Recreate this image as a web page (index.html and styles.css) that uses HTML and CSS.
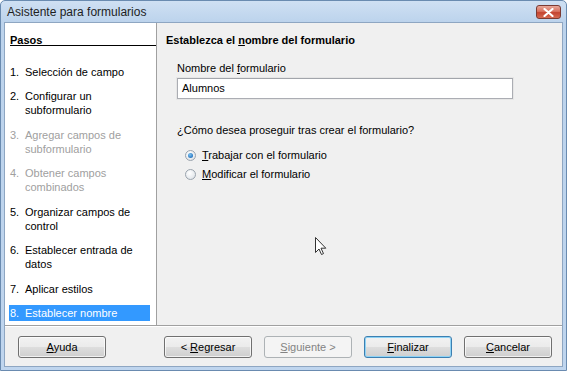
FILE: index.html
```html
<!DOCTYPE html>
<html lang="es">
<head>
<meta charset="utf-8">
<title>Asistente para formularios</title>
<link rel="stylesheet" href="styles.css">
</head>
<body>
<div class="window">
  <div class="titlebar">
    <span class="title">Asistente para formularios</span>
    <span class="close"><svg width="11" height="9" viewBox="0 0 11 9"><path d="M1.5 1 L9.5 8 M9.5 1 L1.5 8" stroke="#fff" stroke-width="2.2" stroke-linecap="round"/></svg></span>
  </div>
  <div class="client">
    <div class="main">
      <div class="steps">
        <div class="steps-head">Pasos</div>
        <ol class="step-list">
          <li class="step"><span class="num">1.</span><span class="txt">Selección de campo</span></li>
          <li class="step"><span class="num">2.</span><span class="txt">Configurar un subformulario</span></li>
          <li class="step disabled"><span class="num">3.</span><span class="txt">Agregar campos de subformulario</span></li>
          <li class="step disabled"><span class="num">4.</span><span class="txt">Obtener campos combinados</span></li>
          <li class="step"><span class="num">5.</span><span class="txt">Organizar campos de control</span></li>
          <li class="step"><span class="num">6.</span><span class="txt">Establecer entrada de datos</span></li>
          <li class="step"><span class="num">7.</span><span class="txt">Aplicar estilos</span></li>
          <li class="step selected"><span class="num">8.</span><span class="txt">Establecer nombre</span></li>
        </ol>
      </div>
      <div class="page">
        <div class="page-head">Establezca el <u>n</u>ombre del formulario</div>
        <div class="field">
          <label class="field-label">Nombre del <u>f</u>ormulario</label>
          <div class="input">Alumnos</div>
        </div>
        <div class="question">¿Cómo desea proseguir tras crear el formulario?</div>
        <div class="radios">
          <div class="radio-row"><span class="radio checked"><span class="dot"></span></span><span><u>T</u>rabajar con el formulario</span></div>
          <div class="radio-row"><span class="radio"></span><span><u>M</u>odificar el formulario</span></div>
        </div>
        <svg class="cursor" width="12" height="19" viewBox="0 0 12 19"><path d="M0.5 0.5 L0.5 15.5 L4 12 L6.5 17.5 L8.5 16.6 L6 11.2 L10.8 11.2 Z" fill="#fff" stroke="#333" stroke-width="1"/></svg>
      </div>
    </div>
    <div class="footer">
      <button class="btn"><u>A</u>yuda</button>
      <div class="nav">
        <button class="btn">&lt; <u>R</u>egresar</button>
        <button class="btn disabled"><u>S</u>iguiente &gt;</button>
        <button class="btn default"><u>F</u>inalizar</button>
        <button class="btn"><u>C</u>ancelar</button>
      </div>
    </div>
  </div>
</div>
</body>
</html>
```
FILE: styles.css
```css
html, body {
  margin: 0;
  padding: 0;
  background: #ffffff;
}
body {
  font-family: "Liberation Sans", Arial, sans-serif;
  font-size: 11px;
  color: #000;
}
.window {
  width: 567px;
  height: 371px;
  box-sizing: border-box;
  border: 1px solid #6a8bb0;
  border-radius: 5px 5px 0 0;
  background: linear-gradient(to bottom, #cfe0f3 0px, #bcd3ec 21px, #bfd5ee 100%);
  display: flex;
  flex-direction: column;
  padding: 0 3px 3px 3px;
}
.titlebar {
  height: 21px;
  display: flex;
  align-items: center;
  justify-content: space-between;
  padding: 0 2px 0 3px;
}
.title {
  font-size: 12px;
  color: #1e1e1e;
}
.close {
  width: 25px;
  height: 14px;
  box-sizing: border-box;
  border: 1px solid #7a3a33;
  border-radius: 3px;
  background: linear-gradient(to bottom, #e8a89a 0%, #d8715f 45%, #c4432f 55%, #d56a52 100%);
  display: flex;
  align-items: center;
  justify-content: center;
  margin-top: 1px;
}
.client {
  flex: 1;
  background: #f0f0f0;
  border: 1px solid #8ea6c2;
  display: flex;
  flex-direction: column;
}
.main {
  height: 302px;
  display: flex;
  border-bottom: 1px solid #a0a0a0;
  box-shadow: 0 1px 0 #ffffff;
}
.steps {
  width: 151px;
  background: #ffffff;
  border-right: 1px solid #a0a0a0;
  padding-top: 10px;
}
.steps-head {
  font-weight: bold;
  margin-left: 5px;
  line-height: 14px;
  height: 12px;
  border-bottom: 1px solid #000;
  text-decoration: underline;
}
.step-list {
  list-style: none;
  margin: 19px 0 0 4px;
  padding: 0;
  display: flex;
  flex-direction: column;
  gap: 10.45px;
}
.step {
  display: flex;
  width: 141px;
  line-height: 14px;
  padding: 1px 0 1px 1px;
  box-sizing: border-box;
  margin-top: -1px;
  margin-bottom: -1px;
}
.num {
  width: 15px;
  flex: none;
}
.txt {
  flex: 1;
  padding-right: 10px;
}
.step.disabled {
  color: #a0a0a0;
}
.step.selected {
  background: #3399ff;
  color: #ffffff;
}
.page {
  flex: 1;
  position: relative;
  padding: 10px 0 0 9px;
}
.page-head {
  font-weight: bold;
  line-height: 14px;
}
.field {
  margin: 14px 0 0 11px;
  display: flex;
  flex-direction: column;
}
.field-label {
  line-height: 14px;
}
.input {
  margin-top: 3px;
  width: 336px;
  height: 21px;
  box-sizing: border-box;
  border: 1px solid #abadb3;
  border-top-color: #a2a5ab;
  background: #fff;
  line-height: 19px;
  padding-left: 4px;
  box-shadow: 0 0 0 1px #e6e6e6;
}
.question {
  margin: 24px 0 0 11px;
  line-height: 14px;
}
.radios {
  margin: 11px 0 0 19px;
  display: flex;
  flex-direction: column;
  gap: 5px;
}
.radio-row {
  display: flex;
  align-items: center;
  gap: 6px;
  line-height: 14px;
}
.radio {
  width: 9px;
  height: 9px;
  border-radius: 50%;
  border: 1px solid #9aa3ad;
  background: radial-gradient(circle at 40% 35%, #ffffff 0%, #e4e8ec 70%, #cfd5db 100%);
  display: flex;
  align-items: center;
  justify-content: center;
}
.radio .dot {
  width: 5px;
  height: 5px;
  border-radius: 50%;
  background: radial-gradient(circle at 40% 35%, #7fc3f0 0%, #2a78c2 70%, #1b5a99 100%);
}
.cursor {
  position: absolute;
  left: 158px;
  top: 214px;
}
.footer {
  flex: 1;
  display: flex;
  align-items: flex-start;
  justify-content: space-between;
  padding: 10px 10px 0 13px;
}
.nav {
  display: flex;
  gap: 12px;
}
.btn {
  font-family: "Liberation Sans", Arial, sans-serif;
  font-size: 11px;
  width: 88px;
  height: 22px;
  padding: 0;
  border: 1px solid #707070;
  border-radius: 3px;
  background: linear-gradient(to bottom, #f2f2f2 0%, #ebebeb 48%, #dddddd 52%, #cfcfcf 100%);
  color: #000;
  box-shadow: inset 0 0 0 1px rgba(255,255,255,0.7);
}
.btn.disabled {
  border-color: #adb2b5;
  background: #f4f4f4;
  color: #838383;
  box-shadow: none;
}
.btn.default {
  border-color: #3c7fb1;
  box-shadow: inset 0 0 0 1px #8fd3f5;
}
```
